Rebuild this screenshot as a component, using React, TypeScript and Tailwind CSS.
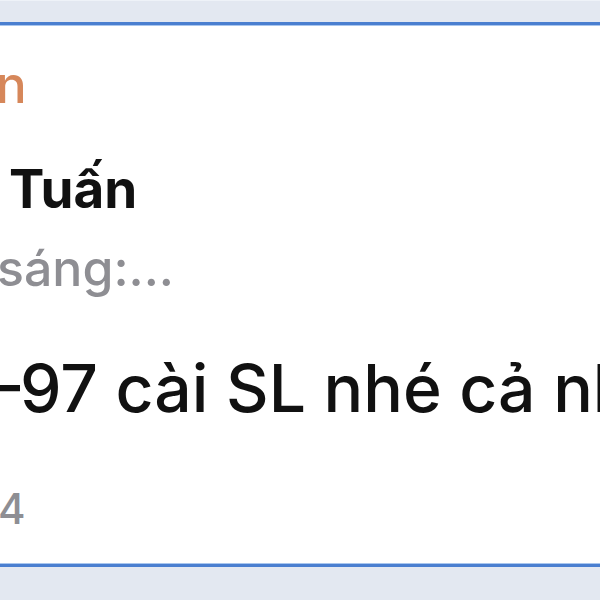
export default function App() {
  return (
    <div className="w-[600px] h-[600px] overflow-hidden bg-white flex flex-col font-['Inter','Liberation_Sans',sans-serif]">
      {/* top band */}
      <div className="h-[22px] shrink-0 bg-[#e3e8f1] border-t border-t-[#eef2f8]" />
      <div className="h-[3px] shrink-0 bg-[#4a7fd0]" />
      <div className="h-px shrink-0 bg-[#a9c6ee]" />

      {/* card */}
      <div className="flex-1 relative overflow-hidden">
        <div className="whitespace-nowrap text-[51px] leading-none text-[#d6875a] font-medium absolute left-[-4px] top-[33px]">
          n
        </div>
        <div className="whitespace-nowrap text-[53px] leading-none text-[#111] font-bold absolute left-[9px] top-[137px]">
          Tuấn
        </div>
        <div className="whitespace-nowrap text-[50px] leading-none text-[#8e8e93] font-medium absolute left-[-3px] top-[217px]">
          sáng:...
        </div>
        <div className="whitespace-nowrap text-[66px] leading-none text-[#111] font-medium absolute left-[-13px] top-[329px]">
          –97 cài SL nhé cả nhà
        </div>
        <div className="whitespace-nowrap text-[42px] leading-none text-[#8e8e93] font-medium absolute left-[-2px] top-[462px]">
          4
        </div>
      </div>

      {/* bottom band */}
      <div className="h-px shrink-0 bg-[#a9c6ee]" />
      <div className="h-[3px] shrink-0 bg-[#4a7fd0]" />
      <div className="h-[33px] shrink-0 bg-[#e3e8f1]" />
    </div>
  );
}
